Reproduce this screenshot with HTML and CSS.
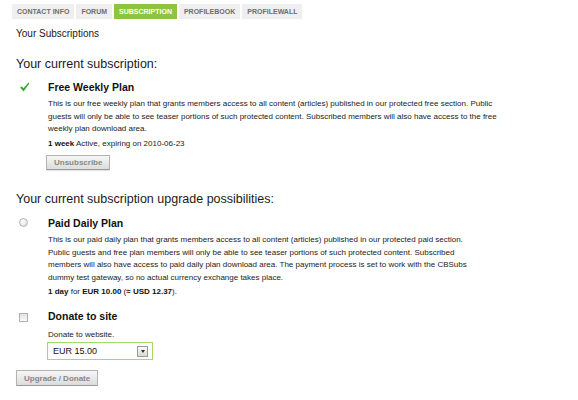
FILE: index.html
```html
<!DOCTYPE html>
<html lang="en">
<head>
    <meta charset="UTF-8">
    <meta name="viewport" content="width=device-width, initial-scale=1.0">
    <title>Your Subscriptions</title>
    <link rel="stylesheet" href="styles.css">
</head>
<body>
    <ul class="tabs">
        <li>Contact Info</li>
        <li>Forum</li>
        <li class="active">Subscription</li>
        <li>Profilebook</li>
        <li>Profilewall</li>
    </ul>

    <div class="tab-body">
        <h1 class="page-title">Your Subscriptions</h1>

        <h2 class="section-title">Your current subscription:</h2>
        <div class="plan">
            <div class="plan-mark">
                <svg class="check" width="11" height="10" viewBox="0 0 11 10">
                    <path d="M1 5.6 L3.2 4.4 L4.4 6.2 L9.6 0.6 L10.4 1.4 L4.6 9.4 Z" fill="#3aa935"/>
                </svg>
            </div>
            <div class="plan-body">
                <h3 class="plan-name">Free Weekly Plan</h3>
                <p class="plan-desc">This is our free weekly plan that grants members access to all content (articles) published in our protected free section. Public<br>
                guests will only be able to see teaser portions of such protected content. Subscribed members will also have access to the free<br>
                weekly plan download area.</p>
                <p class="plan-rate"><b>1 week</b> Active, expiring on 2010-06-23</p>
                <button class="btn btn-small">Unsubscribe</button>
            </div>
        </div>

        <h2 class="section-title upgrades">Your current subscription upgrade possibilities:</h2>
        <div class="plan upgrade">
            <div class="plan-mark">
                <input type="radio" class="radio" name="plan">
            </div>
            <div class="plan-body">
                <h3 class="plan-name">Paid Daily Plan</h3>
                <p class="plan-desc">This is our paid daily plan that grants members access to all content (articles) published in our protected paid section.<br>
                Public guests and free plan members will only be able to see teaser portions of such protected content. Subscribed<br>
                members will also have access to paid daily plan download area. The payment process is set to work with the CBSubs<br>
                dummy test gateway, so no actual currency exchange takes place.</p>
                <p class="plan-rate"><b>1 day</b> for <b>EUR 10.00</b> (<b>&asymp; USD 12.37</b>).</p>
            </div>
        </div>

        <div class="plan donate">
            <div class="plan-mark">
                <input type="checkbox" class="checkbox">
            </div>
            <div class="plan-body">
                <h3 class="plan-name">Donate to site</h3>
                <p class="donate-note">Donate to website.</p>
                <div class="select-box">
                    <select class="amount">
                        <option>EUR 15.00</option>
                    </select>
                    <span class="select-arrow"></span>
                </div>
            </div>
        </div>

        <button class="btn btn-submit">Upgrade / Donate</button>
    </div>
</body>
</html>
```

FILE: styles.css
```css
body {
    margin: 0;
    padding: 0;
    font-family: "Liberation Sans", Arial, sans-serif;
    color: #222;
    background: #fff;
}
.tabs {
    list-style: none;
    margin: 4px 0 0 12px;
    padding: 0;
    display: flex;
    gap: 2px;
}
.tabs li {
    height: 15px;
    line-height: 15px;
    padding: 0 5px;
    font-size: 7px;
    font-weight: bold;
    text-transform: uppercase;
    color: #6e6e6e;
    background-color: #efefef;
}
.tabs li.active {
    background-color: #8cc63f;
    color: #fff;
}
.tab-body {
    padding-left: 16px;
}
.page-title {
    margin: 9px 0 0;
    font-size: 10px;
    line-height: 12px;
    font-weight: normal;
    color: #1a1a1a;
}
.section-title {
    margin: 16px 0 0;
    font-size: 12.5px;
    line-height: 16px;
    font-weight: normal;
    color: #1a1a1a;
}
.section-title.upgrades {
    margin-top: 21px;
}
.plan {
    display: grid;
    grid-template-columns: 32px 1fr;
    margin-top: 9px;
}
.plan.upgrade {
    margin-top: 10px;
}
.plan.donate {
    margin-top: 11px;
}
.plan-mark {
    padding-left: 3px;
    padding-top: 1px;
}
.plan-name {
    margin: 0;
    font-size: 10.5px;
    line-height: 13px;
    font-weight: bold;
    color: #111;
}
.plan-desc {
    margin: 4px 0 0;
    white-space: nowrap;
    font-size: 8px;
    line-height: 12.5px;
    color: #222;
}
.plan-rate {
    margin: 2px 0 0;
    font-size: 8px;
    line-height: 12.5px;
    color: #222;
}
.plan-rate b {
    color: #111;
}
.check {
    display: block;
}
.radio {
    appearance: none;
    display: block;
    margin: 0;
    width: 9px;
    height: 9px;
    border: 1px solid #b4b4b4;
    border-radius: 50%;
    background: radial-gradient(circle at 40% 35%, #ffffff, #d6d6d6);
    box-sizing: border-box;
}
.checkbox {
    appearance: none;
    display: block;
    margin: 2px 0 0;
    width: 9px;
    height: 9px;
    border: 1px solid #b0b0b0;
    background: linear-gradient(#e2e2e2, #fafafa);
    box-sizing: border-box;
}
.donate-note {
    margin: 6px 0 0;
    font-size: 8px;
    line-height: 12.5px;
    color: #222;
}
.select-box {
    margin: 1px 0 0 -1px;
    width: 106px;
    height: 18px;
    box-sizing: border-box;
    border: 1px solid #a6d86a;
    background: #fff;
    display: flex;
    align-items: center;
}
.amount {
    appearance: none;
    flex: 1;
    border: none;
    background: transparent;
    padding: 0 0 0 5px;
    margin: 0;
    font-family: "Liberation Sans", Arial, sans-serif;
    font-size: 9px;
    color: #111;
    outline: none;
}
.select-arrow {
    width: 9px;
    height: 9px;
    margin-right: 4px;
    border: 1px solid #9a9a9a;
    background: linear-gradient(#fafafa, #d8d8d8);
    display: flex;
    align-items: center;
    justify-content: center;
}
.select-arrow::after {
    content: "";
    border-left: 2.5px solid transparent;
    border-right: 2.5px solid transparent;
    border-top: 3px solid #333;
}
.btn {
    display: block;
    padding: 0 7px;
    border: 1px solid #b3b3b3;
    border-bottom-color: #999;
    border-radius: 1px;
    background: linear-gradient(#f6f6f6, #dcdcdc);
    font-family: "Liberation Sans", Arial, sans-serif;
    font-size: 8px;
    font-weight: bold;
    color: #888;
    box-shadow: 0 1px 1px rgba(0, 0, 0, 0.12);
    cursor: pointer;
}
.btn-small {
    margin: 5px 0 0 -2px;
    height: 15px;
}
.btn-submit {
    margin-top: 10px;
    height: 16px;
}
```
